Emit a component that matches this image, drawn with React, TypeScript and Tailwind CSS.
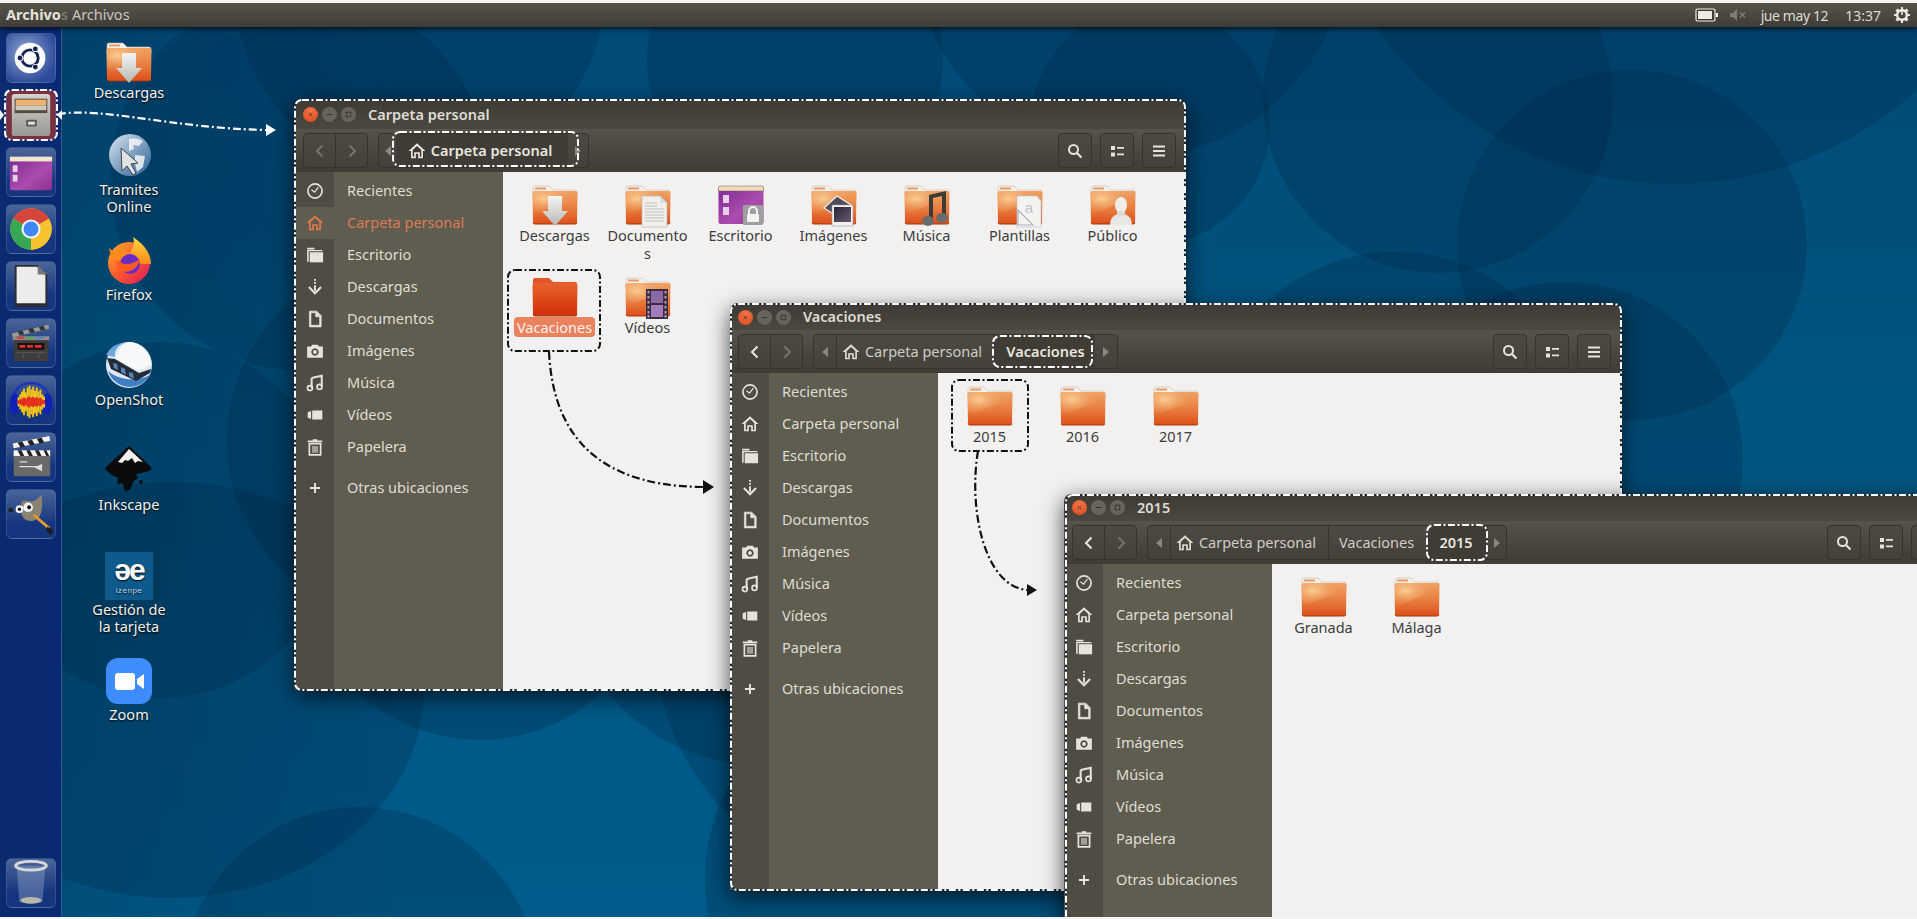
import React from "react";

const ink = "#e6e3da";

function SideIcon({ name, color = ink }: { name: string; color?: string }) {
  const c = color;
  const body: Record<string, React.ReactNode> = {
    clock: (<><circle cx="8" cy="8" r="6.300" fill="none" stroke={c} strokeWidth="1.500" /><path d="M4.800 6.800 7.600 9 11 4.600" fill="none" stroke={c} strokeWidth="1.100" /></>),
    home: (<path fillRule="evenodd" d="M8 1 .5 8h2.200v6.500H7v-4h2v4h4.300V8h2.200zM8 3.500 4.200 7.100V13h1.300V9h5v4h1.300V7.100z" fill={c} />),
    folder: (<><path d="M1 1.500h6.500V3H1zM1 3.500h13.500v1.200H2.400V14H1z" fill={c} /><path d="M3.300 5.500H15.200V14.500H3.300z" fill={c} /></>),
    down: (<><path d="M8 .8v1.600M8 3.600v1.600M8 6.400v5" stroke={c} strokeWidth="1.700" /><path d="M2.600 8 8 13.600 13.400 8" fill="none" stroke={c} strokeWidth="1.800" /></>),
    doc: (<path fillRule="evenodd" d="M3 1h6.500L13.500 5v10H3zM4.400 2.400v11.200h7.700V6H8.600V2.400z" fill={c} stroke={c} strokeWidth=".6" />),
    cam: (<path fillRule="evenodd" d="M5.500 2.500h5l1 1.500H15v10H1V4h3.500zM8 5.600a3.300 3.300 0 1 0 .01 0zM8 7.200a1.700 1.700 0 1 1-.01 0z" fill={c} />),
    music: (<><path d="M5 3.500 14 1.500v10" fill="none" stroke={c} strokeWidth="1.800" /><path d="M5 3.500V12.500" stroke={c} strokeWidth="1.800" /><circle cx="3.500" cy="12.500" r="2.200" fill="none" stroke={c} strokeWidth="1.500" /><circle cx="12" cy="11.500" r="2.200" fill="none" stroke={c} strokeWidth="1.500" /></>),
    video: (<><path d="M5.500 4h9v8h-9z" fill={c} /><path d="M1.500 5.500 4.500 4.500v7l-3-1z" fill={c} /></>),
    trash: (<><path d="M6 1h4v1.200h4.500v1.600h-13V2.200H6z" fill={c} /><path d="M3 5h10v10H3z" fill="none" stroke={c} strokeWidth="1.500" /><path d="M6.200 7v6M8 7v6M9.800 7v6" stroke={c} strokeWidth="1" /></>),
    plus: (<path d="M8 3.500v9M3.500 8h9" stroke={c} strokeWidth="1.700" />),
  };
  return <svg viewBox="0 0 16 16" className="h-[18px] w-[18px]">{body[name]}</svg>;
}

function Folder({ dark = false, children }: { dark?: boolean; children?: React.ReactNode }) {
  return (
    <svg viewBox="0 0 48 48" className="h-12 w-12 block">
      {dark ? (
        <path d="M2 9V7q0-2 2-2h14l4 4h22q2 0 2 2v4H2z" fill="#e2552a" />
      ) : (
        <>
          <path d="M2 9V7q0-2 2-2h14l4 4h22q2 0 2 2v4H2z" fill="#f6f1ea" stroke="#c9b8a8" strokeWidth=".6" />
          <rect x="4" y="6.500" width="11" height="2" fill="#e79a6a" />
        </>
      )}
      <path d="M1.500 12q0-2 2-2h41q2 0 2 2l-.5 29q0 2-2 2H4q-2 0-2-2z" fill={dark ? "url(#fd)" : "url(#fl)"} />
      {!dark && <path d="M1.500 12q0-2 2-2h41q2 0 2 2l-.2 10Q26 20 2 36z" fill="url(#fh)" />}
      <path d="M2 41.500q0 1.500 2 1.500h40q2 0 2-1.500" fill="none" stroke="#a8340d" strokeWidth="1" />
      {children}
    </svg>
  );
}

const arrowOverlay = (<path d="M17 15h14v15h6L24 45 11 30h6z" fill="url(#silver)" />);
const docOverlay = (<><path d="M18 15h18l7 7v24H18z" fill="#f1efec" stroke="#bcb6ad" strokeWidth=".7" /><path d="M36 15v7h7z" fill="#cfe0ee" /><path d="M21 22h12M21 25h12M21 28h19M21 31h19M21 34h19M21 37h19M21 40h19" stroke="#b5b2ac" strokeWidth=".8" /></>);
const imgOverlay = (<><path d="M14 27 27 15l14 9-10 14z" fill="#544a5a" stroke="#f1efec" strokeWidth="1.200" /><rect x="22" y="24" width="21" height="21" fill="#f4f2ef" stroke="#9a9a9a" strokeWidth=".6" /><rect x="24" y="26" width="17" height="15" fill="url(#imgd)" /></>);
const musicOverlay = (<><path d="M26 14 43 10v4l-13 3v23h-4zM39 13l4-1v25h-4z" fill="#3e3a36" /><ellipse cx="25" cy="40" rx="6" ry="5" fill="#6b6b6b" /><ellipse cx="39" cy="37" rx="6" ry="5" fill="#6b6b6b" /></>);
const tplOverlay = (<><path d="M21 15h20l4 5v26H21z" fill="#f5f3f0" stroke="#bcc4cf" strokeWidth=".7" /><text x="33" y="32" fontSize="15" fill="#b8c4d2" textAnchor="middle" fontFamily="'Liberation Sans',sans-serif">a</text><path d="M22 29v15h15z" fill="none" stroke="#a9b3c0" strokeWidth="1.200" /></>);
const userOverlay = (<><ellipse cx="32" cy="24" rx="6" ry="8" fill="#efedea" /><path d="M21 44q0-9 8-11h6q8 2 8 11z" fill="#e9e7e3" /><path d="M28 30h8v5h-8z" fill="#dedbd7" /></>);
const filmOverlay = (<><rect x="22" y="16" width="22" height="30" fill="#3b2c44" /><rect x="27" y="18" width="12" height="12" fill="#8b6aa3" /><rect x="27" y="32" width="12" height="12" fill="#a37cbb" />{[18, 23, 28, 33, 38, 42].map((y) => (<g key={y}><rect x="23.500" y={y} width="2" height="2.500" fill="#b9a" /><rect x="40.500" y={y} width="2" height="2.500" fill="#b9a" /></g>))}</>);

function DesktopWork({ lock = false }: { lock?: boolean }) {
  return (
    <svg viewBox="0 0 48 48" className="h-12 w-12 block">
      <rect x="1.500" y="5" width="45" height="38" rx="2" fill="url(#purple)" />
      <path d="M1.500 10V7q0-2 2-2h41q2 0 2 2v3z" fill="#f0dcb8" stroke="#7a5a60" strokeWidth=".5" />
      <rect x="6" y="14" width="6" height="8" fill="#e9cfe8" />
      <rect x="6" y="26" width="6" height="8" fill="#e9cfe8" />
      {lock && (<><rect x="26" y="24" width="20" height="20" rx="1" fill="#9f9f9d" /><path d="M32 33v-3a4 4 0 0 1 8 0v3" fill="none" stroke="#f2f2f2" strokeWidth="2" /><rect x="30" y="33" width="12" height="8" rx="1" fill="#f2f2f2" /></>)}
    </svg>
  );
}

type Item = { label: React.ReactNode; kind: string };
const homeItems: Item[] = [
  { label: "Descargas", kind: "down" },
  { label: (<>Documento<br />s</>), kind: "doc" },
  { label: "Escritorio", kind: "desk" },
  { label: "Imágenes", kind: "img" },
  { label: "Música", kind: "music" },
  { label: "Plantillas", kind: "tpl" },
  { label: "Público", kind: "user" },
  { label: "Vacaciones", kind: "sel" },
  { label: "Vídeos", kind: "film" },
];

function FileIcon({ kind }: { kind: string }) {
  if (kind === "desk") return <DesktopWork lock />;
  if (kind === "sel") return <Folder dark />;
  const o: Record<string, React.ReactNode> = { down: arrowOverlay, doc: docOverlay, img: imgOverlay, music: musicOverlay, tpl: tplOverlay, user: userOverlay, film: filmOverlay };
  return <Folder>{o[kind]}</Folder>;
}

const places: [string, string][] = [
  ["clock", "Recientes"], ["home", "Carpeta personal"], ["folder", "Escritorio"], ["down", "Descargas"], ["doc", "Documentos"], ["cam", "Imágenes"], ["music", "Música"], ["video", "Vídeos"], ["trash", "Papelera"],
];

function Sidebar({ activeHome = false }: { activeHome?: boolean }) {
  const row = (icon: string, label: string, on: boolean) => (
    <div key={label} className="flex h-8 items-center">
      <div className={`flex h-full w-[39px] shrink-0 items-center justify-center ${on ? "bg-[#5f5c50]" : ""}`}>
        <SideIcon name={icon} color={on ? "#e2774a" : ink} />
      </div>
      <span className={`pl-[13px] ${on ? "text-[#db7a53]" : "text-[#dfdcd3]"}`}>{label}</span>
    </div>
  );
  return (
    <div className="relative h-full w-[208px] shrink-0 bg-[linear-gradient(to_right,#4f4d43_39px,#5f5c50_39px)] pt-[3px] text-[14.5px]">
      {places.map(([i, l]) => row(i, l, !!activeHome && l === "Carpeta personal"))}
      <div className="mt-[9px]">{row("plus", "Otras ubicaciones", false)}</div>
    </div>
  );
}

function Chevron({ dir, on }: { dir: "l" | "r"; on: boolean }) {
  return (
    <svg viewBox="0 0 16 16" className="h-4 w-4">
      <path d={dir === "l" ? "M10.500 2.500 5 8l5.500 5.500" : "M5.500 2.500 11 8l-5.500 5.500"} fill="none" stroke={on ? "#e8e5de" : "#76736a"} strokeWidth="2" />
    </svg>
  );
}

function Tri({ dir }: { dir: "l" | "r" }) {
  return (
    <svg viewBox="0 0 8 12" className="h-3 w-2">
      <path d={dir === "l" ? "M7 1 1 6l6 5z" : "M1 1l6 5-6 5z"} fill="#8a877e" />
    </svg>
  );
}

const segBtn = "border border-[#36332e] bg-[linear-gradient(#4e4a43,#44413a)]";

function RightButtons() {
  return (
    <div className="ml-auto flex gap-2 pr-[9px]">
      <button className={`flex h-[35px] w-[34px] items-center justify-center rounded-[4px] ${segBtn}`}>
        <svg viewBox="0 0 16 16" className="h-4 w-4"><circle cx="6.500" cy="6.500" r="4.500" fill="none" stroke={ink} strokeWidth="2" /><path d="M10 10l4.500 4.500" stroke={ink} strokeWidth="2.200" /></svg>
      </button>
      <button className={`flex h-[35px] w-[34px] items-center justify-center rounded-[4px] ${segBtn}`}>
        <svg viewBox="0 0 16 16" className="h-4 w-4"><path d="M2 3h4v4H2zM2 9.500h4v4H2zM8 4h7v1.800H8zM8 10.500h7v1.800H8z" fill={ink} /></svg>
      </button>
      <button className={`flex h-[35px] w-[34px] items-center justify-center rounded-[4px] ${segBtn}`}>
        <svg viewBox="0 0 16 16" className="h-4 w-4"><path d="M2 2.500h12v2H2zM2 7h12v2H2zM2 11.500h12v2H2z" fill={ink} /></svg>
      </button>
    </div>
  );
}

type Crumb = { label: string; home?: boolean; active?: boolean; w: string };

function PathBar({ crumbs, leftW, rightW, solo }: { crumbs: Crumb[]; leftW: string; rightW: string; solo?: boolean }) {
  return (
    <div className={`ml-[10px] flex h-[35px] overflow-hidden rounded-[4px] ${segBtn}`}>
      <div className={`flex ${leftW} items-center justify-center`}><Tri dir="l" /></div>
      {crumbs.map((c, i) => (
        <div key={c.label} className={`flex ${c.w} items-center justify-center gap-[5px] ${i === 0 && !solo ? "border-l border-[#36332e]" : ""} ${i > 0 && !c.active ? "border-l border-[#36332e]" : ""} ${c.active ? "bg-[#3f3c35] font-semibold text-[#e8e5de]" : "text-[#cfccc3]"}`}>
          {c.home && (
            <svg viewBox="0 0 16 16" className="h-[18px] w-[18px]"><path fillRule="evenodd" d="M8 1 .5 8h2.200v6.500H7v-4h2v4h4.300V8h2.200zM8 3.500 4.200 7.100V13h1.300V9h5v4h1.300V7.100z" fill={c.active ? "#e8e5de" : "#dcd9d0"} /></svg>
          )}
          <span>{c.label}</span>
        </div>
      ))}
      <div className={`flex ${rightW} items-center justify-center`}><Tri dir="r" /></div>
    </div>
  );
}

function Ctl({ color, mark }: { color: string; mark: string }) {
  return (
    <span className={`flex h-[15px] w-[15px] items-center justify-center rounded-full ${color}`}>
      <svg viewBox="0 0 10 10" className="h-[9px] w-[9px]">
        {mark === "x" && <path d="M3 3l4 4M7 3 3 7" stroke="#6e2a10" strokeWidth="1.100" />}
        {mark === "-" && <path d="M2 5h6" stroke="#37352f" strokeWidth="1.300" />}
        {mark === "o" && <rect x="2.500" y="2.500" width="5" height="5" fill="none" stroke="#37352f" strokeWidth="1" />}
      </svg>
    </span>
  );
}

function FileGrid({ items }: { items: Item[] }) {
  return (
    <div className="grid grid-cols-[repeat(7,93px)] auto-rows-[92px] pl-[5px] pt-[9px] text-[14.5px]">
      {items.map((it) => (
        <div key={it.kind + String(it.label)} className="flex flex-col items-center">
          <FileIcon kind={it.kind} />
          <span className={`text-center leading-[18px] ${it.kind === "sel" ? "-mt-[4px] rounded-[4px] bg-[#e9825d] px-[3px] py-[1px] text-[#fdf3ee]" : "-mt-[3px] text-[#3d3d3d]"}`}>{it.label}</span>
        </div>
      ))}
    </div>
  );
}

function Win({ pos, titleH, title, nav, crumbs, leftW, rightW, items, activeHome, solo }: { pos: string; titleH: string; title: string; nav: boolean; crumbs: Crumb[]; leftW: string; rightW: string; items: Item[]; activeHome?: boolean; solo?: boolean }) {
  return (
    <div className={`absolute flex w-[890px] flex-col overflow-hidden rounded-t-[7px] shadow-[0_6px_22px_rgba(0,0,0,.7)] ${pos}`}>
      <div className={`flex ${titleH} shrink-0 items-center bg-[linear-gradient(#3e3b35,#4b4840)] pl-[8px]`}>
        <div className="flex gap-[4px]">
          <Ctl color="bg-[radial-gradient(circle_at_50%_30%,#f0764a,#d9481c)]" mark="x" />
          <Ctl color="bg-[#67645b]" mark="-" />
          <Ctl color="bg-[#67645b]" mark="o" />
        </div>
        <span className="pl-[12px] text-[14.5px] font-semibold text-[#dedbd2]">{title}</span>
      </div>
      <div className="flex h-[43px] shrink-0 items-center bg-[linear-gradient(#57534b,#3f3c35)] pl-[8px] text-[14.5px]">
        <div className={`flex h-[35px] w-[65px] overflow-hidden rounded-[4px] ${segBtn}`}>
          <div className="flex flex-1 items-center justify-center border-r border-[#36332e]"><Chevron dir="l" on={nav} /></div>
          <div className="flex flex-1 items-center justify-center"><Chevron dir="r" on={false} /></div>
        </div>
        <PathBar crumbs={crumbs} leftW={leftW} rightW={rightW} solo={solo} />
        <RightButtons />
      </div>
      <div className="flex flex-1 bg-[#f2f1f0]">
        <Sidebar activeHome={activeHome} />
        <div className="min-w-0 flex-1"><FileGrid items={items} /></div>
      </div>
    </div>
  );
}

function Dash({ x, y, w, h, color = "#fff", r = 7, dark = false }: { x: number; y: number; w: number; h: number; color?: string; r?: number; dark?: boolean }) {
  return (
    <g>
      {dark && <rect x={x} y={y} width={w} height={h} rx={r} fill="none" stroke="#1d2a33" strokeWidth="2" />}
      <rect x={x} y={y} width={w} height={h} rx={r} fill="none" stroke={color} strokeWidth="2" strokeDasharray="7 2.500 2 2.500" />
    </g>
  );
}

function Overlay({ children }: { children: React.ReactNode }) {
  return <svg viewBox="0 0 1917 919" className="pointer-events-none absolute left-0 top-0 h-[919px] w-[1917px]">{children}</svg>;
}

const dashLine = { fill: "none", strokeWidth: 2.2, strokeDasharray: "8 3 2 3" };

function Tile({ children, extra = "" }: { children: React.ReactNode; extra?: string }) {
  return (
    <div className={`h-[50px] w-[50px] shrink-0 overflow-hidden rounded-[6px] border border-[#5b76a8]/40 ${extra || "bg-[linear-gradient(#4a6598,#16357f_70%)]"}`}>
      <svg viewBox="0 0 50 50" className="h-full w-full">{children}</svg>
    </div>
  );
}

const wave = [5, 8, 11, 14, 10, 15, 17, 13, 16, 12, 15, 11, 13, 8, 6];

function Launcher() {
  return (
    <aside className="relative z-0 flex h-full w-[62px] shrink-0 flex-col gap-[7px] border-r border-[#4d6b9c]/70 bg-[linear-gradient(to_right,#0b2a70,#082a72)] pl-[6px] pt-[6px]">
      <Tile extra="bg-[radial-gradient(circle_at_40%_40%,#93a9d2,#2b4a9a_75%)]">
        <circle cx="24" cy="25" r="16" fill="#fff" />
        <circle cx="24" cy="25" r="8.500" fill="none" stroke="#14234f" strokeWidth="3" />
        <circle cx="13.500" cy="25" r="3.300" fill="#fff" /><circle cx="29.500" cy="15.500" r="3.300" fill="#fff" /><circle cx="29.500" cy="34.500" r="3.300" fill="#fff" />
        <circle cx="13.500" cy="25" r="2.500" fill="#14234f" /><circle cx="29.500" cy="15.500" r="2.500" fill="#14234f" /><circle cx="29.500" cy="34.500" r="2.500" fill="#14234f" />
      </Tile>
      <Tile extra="bg-[#7a3040]">
        <rect x="5" y="3" width="40" height="44" rx="3" fill="url(#cab)" />
        <rect x="8" y="8" width="34" height="15" fill="#54493f" />
        <rect x="9" y="9" width="32" height="6" fill="#efb26f" />
        <rect x="9" y="15" width="32" height="5" fill="#cfc9bd" />
        <rect x="20" y="30" width="11" height="7" rx="1" fill="#5a5a5a" /><rect x="22" y="32" width="7" height="3" fill="#e5e5e5" />
      </Tile>
      <Tile>
        <rect x="3" y="9" width="44" height="35" rx="2" fill="url(#purple)" />
        <rect x="3" y="9" width="44" height="5" fill="#f3e6c8" />
        <rect x="6" y="18" width="5" height="7" fill="#e8cfe8" /><rect x="6" y="28" width="5" height="7" fill="#e8cfe8" />
      </Tile>
      <Tile>
        <circle cx="25" cy="25" r="21.500" fill="#e0c040" />
        <path d="M25 25 6.400 14.200A21.500 21.500 0 0 1 43.600 14.200z" fill="#d6453c" />
        <path d="M25 25 6.400 14.200A21.500 21.500 0 0 0 25 46.500z" fill="#36a853" />
        <path d="M25 25 43.600 14.200A21.500 21.500 0 0 1 25 46.500z" fill="#f6c22d" />
        <circle cx="25" cy="25" r="10" fill="#f4f4f4" /><circle cx="25" cy="25" r="7.800" fill="#4285f4" />
      </Tile>
      <Tile>
        <path d="M8 3h24l10 10v34H8z" fill="#2b2d33" />
        <path d="M10 5h21l9 9v29H10z" fill="#ececea" />
        <path d="M32 3l10 10H32z" fill="#74767e" />
      </Tile>
      <Tile>
        <rect x="7" y="22" width="36" height="22" rx="2" fill="#3f3d3b" />
        <path d="M5 15 43 6l1 4L6 19z" fill="#9c9a94" /><path d="M11 13l5-1 2 4-5 1zM22 10.500l5-1 2 4-5 1zM33 8l5-1 2 4-5 1z" fill="#333" />
        <rect x="6" y="18" width="38" height="4" fill="#8f8d87" />
        <rect x="10" y="18.500" width="8" height="2.500" fill="#c44" /><rect x="20" y="18.500" width="8" height="2.500" fill="#5a5" /><rect x="30" y="18.500" width="8" height="2.500" fill="#58c" />
        <rect x="11" y="25" width="28" height="7" fill="#1b1010" /><path d="M13 28.500h6M21 28.500h6M29 28.500h7" stroke="#e0332c" strokeWidth="3" />
        <path d="M9 35h32M17 35v6M33 35v6" stroke="#5a5855" strokeWidth="1" />
      </Tile>
      <Tile>
        <path d="M6 26C6 1 44 1 44 26" fill="none" stroke="#1c34b5" strokeWidth="2.500" />
        <ellipse cx="8" cy="29" rx="5" ry="11" fill="#0f21b8" /><ellipse cx="42" cy="29" rx="5" ry="11" fill="#0f21b8" />
        {wave.map((h, i) => (<rect key={i} x={11 + i * 1.900} y={27 - h} width="2" height={h * 2} rx="1" fill="#f9c61c" />))}
        {wave.map((h, i) => (<rect key={i} x={11 + i * 1.900} y={27 - h / 3} width="2" height={(h * 2) / 3} fill="#e6281c" />))}
      </Tile>
      <Tile>
        <rect x="7" y="19" width="38" height="26" rx="1" fill="#6a6a68" />
        <rect x="7" y="18" width="38" height="6" fill="#f4f4f4" />
        <path d="M11 18l3 6h4l-3-6zM20 18l3 6h4l-3-6zM29 18l3 6h4l-3-6zM38 18l3 6h3l-3-6z" fill="#222" />
        <path d="M6 11 44 3l1 5L7 16z" fill="#f2f2f2" />
        <path d="M11 10l5-1 3 5-5 1zM21 8l5-1 3 5-5 1zM31 6l5-1 3 5-5 1z" fill="#222" />
        <path d="M13 30h8M13 35h20M30 36l6-3v6z" stroke="#ddd" fill="#ddd" strokeWidth="1.200" />
      </Tile>
      <Tile>
        <path d="M15 16C14 8 20 12 25 12s9-5 11-7c1 8 1 14-1 20-3 8-12 9-17 5-4-4-4-10-3-14z" fill="#8a8272" />
        <circle cx="22" cy="18" r="5" fill="#f5f5f5" /><circle cx="23" cy="18" r="2" fill="#111" />
        <circle cx="13" cy="20" r="4" fill="#f5f5f5" /><circle cx="13" cy="20" r="1.800" fill="#111" />
        <circle cx="4" cy="21" r="2.500" fill="#222" />
        <path d="M28 26 44 40" stroke="#e39b2c" strokeWidth="3" /><path d="M42 38l6 4-2 5-5-4z" fill="#1b1b1b" />
      </Tile>
      <div className="mb-[9px] mt-auto">
        <Tile>
          <path d="M10 7h30l-3 38q-12 2-24 0z" fill="#9fb1d0" opacity=".38" />
          <ellipse cx="25" cy="7" rx="16" ry="4.500" fill="none" stroke="#d8d8d8" strokeWidth="3" />
          <ellipse cx="25" cy="43" rx="11" ry="3.500" fill="#b9b9ab" />
        </Tile>
      </div>
    </aside>
  );
}

function Icon48({ children }: { children: React.ReactNode }) {
  return <svg viewBox="0 0 48 48" className="h-12 w-12 block">{children}</svg>;
}

const desktopIcons: { top: string; gap: string; label: React.ReactNode; icon: React.ReactNode }[] = [
  { top: "top-[38px]", gap: "-mt-[2px]", label: "Descargas", icon: <Folder>{arrowOverlay}</Folder> },
  {
    top: "top-[131px]", gap: "mt-[2px]", label: (<>Tramites<br />Online</>), icon: (
      <Icon48>
        <circle cx="25" cy="24" r="21" fill="url(#globe)" />
        <path d="M24 8q8-2 14 2l-4 5-6-1 1 4-5 2zM30 24l10 1-2 11-6 5-2-8z" fill="#f1f4f7" opacity=".85" />
        <path d="M16 17l1 23 5-5 6 9 3-2-5-9 7-1z" fill="#dfe3e3" stroke="#3b4650" strokeWidth="1" />
      </Icon48>
    ),
  },
  {
    top: "top-[236px]", gap: "mt-[2px]", label: "Firefox", icon: (
      <Icon48>
        <circle cx="24" cy="27" r="21" fill="url(#ffx)" />
        <path d="M28 1c12 8 18 17 18 27H30c0-6 0-8-5-11 3-5 5-10 3-16z" fill="url(#ffy)" />
        <path d="M4 12c3 3 5 3 9 2l3-5c1 6 6 5 9 9l-10 6c-6 1-10-5-11-12z" fill="#ff8a1e" />
        <circle cx="25" cy="28" r="10" fill="#6c2bc4" />
        <path d="M12 24c4 4 12 7 23-1-2 10-12 16-20 11-3-2-4-6-3-10z" fill="#ff5d20" />
      </Icon48>
    ),
  },
  {
    top: "top-[341px]", gap: "mt-[2px]", label: "OpenShot", icon: (
      <Icon48>
        <circle cx="24" cy="24" r="23" fill="#dfe9f3" />
        <path d="M3 30a23 23 0 0 0 42 4C30 42 12 38 3 30z" fill="#3f7fc4" />
        <path d="M22 1C14 6 10 14 12 19l20 10c6 0 13-4 14-6C45 10 34 0 22 1z" fill="#f6f8fa" />
        <path d="M22 1C12 4 9 10 10 16l-9-2q6-12 21-13z" fill="#6ca5dc" />
        <path d="M2 17l8 1 24 14 12-4-1 4-14 8L6 28z" fill="#222c3a" />
        <path d="M8 22l4 1 1 6-4-2zM16 26l4 2 1 6-5-3zM24 31l4 1 1 6-5-3z" fill="#5a86b5" />
      </Icon48>
    ),
  },
  {
    top: "top-[446px]", gap: "mt-[2px]", label: "Inkscape", icon: (
      <Icon48>
        <path d="M24 0 46 21q1 3-2 4l-12 3q-2 0 0 2 2 3-2 4l-2 2q0 4-4 8-3 3-5-1l-1-5-5-2q-2-3 1-4-9-3-12-7-3-2-1-4z" fill="#0b0b0b" />
        <path d="M24 3 38 16l-5-1-3 2-3-5-4 3-3-1-3 3-4-1z" fill="#f2f2f2" />
        <circle cx="36" cy="36" r="2" fill="#111" /><circle cx="14" cy="37" r="1.500" fill="#111" />
      </Icon48>
    ),
  },
  {
    top: "top-[552px]", gap: "mt-[1px]", label: (<>Gestión de<br />la tarjeta</>), icon: (
      <div className="flex h-12 w-12 flex-col items-center bg-[#0f5a8d] pt-[2px] font-['Liberation_Sans',sans-serif] text-white">
        <span className="text-[30px] font-bold leading-[32px] tracking-[-2px]">əe</span>
        <span className="text-[8px] leading-[9px] tracking-[.5px] text-[#c4d8e6]">izenpe</span>
      </div>
    ),
  },
  {
    top: "top-[657px]", gap: "mt-[1px]", label: "Zoom", icon: (
      <Icon48>
        <rect x="1" y="1" width="46" height="46" rx="12" fill="#3f8cff" />
        <rect x="10" y="16" width="20" height="17" rx="3" fill="#fff" />
        <path d="M32 22l7-5v15l-7-5z" fill="#fff" />
      </Icon48>
    ),
  },
];

function DesktopIcons() {
  return (
    <>
      {desktopIcons.map((d, i) => (
        <div key={i} className={`absolute left-[81px] flex w-[96px] flex-col items-center text-center text-[14.5px] leading-[17px] text-[#f1f1ee] [text-shadow:0_1px_2px_#000] ${d.top}`}>
          {d.icon}
          <span className={d.gap}>{d.label}</span>
        </div>
      ))}
    </>
  );
}

const wallShapes: [number, number, number, number][] = [
  [1438, 98, 175, 175], [1674, -177, 361, 361], [1632, 245, 175, 175], [1565, 460, 178, 178], [1395, 440, 188, 188],
  [1150, 125, 120, 120], [360, 985, 178, 178], [172, 690, 252, 208], [160, 520, 178, 178], [410, 440, 183, 183],
  [480, 560, 180, 180], [760, 570, 195, 195], [900, 640, 245, 245], [905, 880, 200, 200], [300, 180, 190, 190],
  [420, -10, 185, 185], [795, 60, 148, 148], [1130, -60, 218, 218], [1240, 1000, 160, 160], [1790, 880, 120, 120],
];

function Wallpaper() {
  return (
    <svg viewBox="0 0 1917 919" className="absolute left-0 top-0 h-[919px] w-[1917px]">
      <rect width="1917" height="919" fill="url(#wall)" />
      {wallShapes.map(([cx, cy, rx, ry]) => (
        <ellipse key={`${cx}-${cy}`} cx={cx} cy={cy} rx={rx} ry={ry} fill="#00213f" fillOpacity=".24" />
      ))}
      <rect width="400" height="919" fill="url(#wallLeft)" />
    </svg>
  );
}

const defs = (
  <svg className="absolute h-0 w-0">
    <defs>
      <linearGradient id="wall" x1="0" y1="0" x2="0" y2="1"><stop offset="0" stopColor="#014a78" /><stop offset=".4" stopColor="#00547f" /><stop offset="1" stopColor="#005c8c" /></linearGradient>
      <linearGradient id="wallLeft" x1="0" y1="0" x2="1" y2="0"><stop offset="0" stopColor="#00213f" stopOpacity=".28" /><stop offset="1" stopColor="#00213f" stopOpacity="0" /></linearGradient>
      <linearGradient id="fl" x1="0" y1="0" x2="0" y2="1"><stop offset="0" stopColor="#f0a264" /><stop offset=".55" stopColor="#e87b3e" /><stop offset="1" stopColor="#dd4f1a" /></linearGradient>
      <radialGradient id="fh" cx=".25" cy=".3" r=".6"><stop offset="0" stopColor="#fbd39a" stopOpacity=".9" /><stop offset="1" stopColor="#f0a264" stopOpacity="0" /></radialGradient>
      <linearGradient id="fd" x1="0" y1="0" x2="0" y2="1"><stop offset="0" stopColor="#e9622e" /><stop offset="1" stopColor="#cf2f07" /></linearGradient>
      <linearGradient id="silver" x1="0" y1="0" x2="0" y2="1"><stop offset="0" stopColor="#f5f5f3" /><stop offset="1" stopColor="#b7b7b3" /></linearGradient>
      <linearGradient id="imgd" x1="0" y1="0" x2="1" y2="1"><stop offset="0" stopColor="#2b2238" /><stop offset="1" stopColor="#6a5a72" /></linearGradient>
      <linearGradient id="purple" x1="0" y1="0" x2="1" y2="1"><stop offset="0" stopColor="#7a2a93" /><stop offset=".6" stopColor="#ac4cae" /><stop offset="1" stopColor="#8a2f8c" /></linearGradient>
      <linearGradient id="cab" x1="0" y1="0" x2="0" y2="1"><stop offset="0" stopColor="#d4d2cc" /><stop offset="1" stopColor="#9a9892" /></linearGradient>
      <linearGradient id="globe" x1="0" y1="0" x2="1" y2="1"><stop offset="0" stopColor="#dbe6f0" /><stop offset="1" stopColor="#2a5f94" /></linearGradient>
      <linearGradient id="ffx" x1="0" y1="0" x2="1" y2="1"><stop offset="0" stopColor="#ffb12a" /><stop offset=".5" stopColor="#ff5a2d" /><stop offset="1" stopColor="#d6145e" /></linearGradient>
      <linearGradient id="ffy" x1="0" y1="0" x2="0" y2="1"><stop offset="0" stopColor="#ffd93a" /><stop offset="1" stopColor="#ff8a1e" /></linearGradient>
    </defs>
  </svg>
);

export default function App() {
  return (
    <div className="relative flex h-[919px] w-[1917px] flex-col overflow-hidden bg-white font-['Noto_Sans',sans-serif]">
      {defs}
      <div className="relative z-50 h-[3px] shrink-0 bg-[#f4f4f2]" />
      <header className="relative z-40 flex h-[24px] shrink-0 items-center justify-between bg-[linear-gradient(#57544c,#3f3c36)] pl-[6px] pr-[7px] text-[14.5px] text-[#dedbd2] shadow-[0_2px_5px_rgba(0,0,0,.7)]">
        <div>
          <span className="font-bold text-[#e6e3da]">Archivo</span><span className="font-bold text-[#77746b]">s</span> <span className="text-[#c9c6bd]">Archivos</span>
        </div>
        <div className="flex items-center text-[14px]">
          <svg viewBox="0 0 24 14" className="h-[14px] w-[24px]"><rect x="1" y="1" width="19" height="12" rx="1.500" fill="#3f3c36" stroke="#f2f0ea" strokeWidth="1.200" /><rect x="3" y="3" width="14" height="8" fill="#eceae3" /><rect x="21" y="5" width="2" height="4" fill="#f2f0ea" /></svg>
          <svg viewBox="0 0 18 14" className="ml-[10px] h-[14px] w-[18px]"><path d="M1 5h3l4-4v12l-4-4H1z" fill="#7f7c73" /><path d="M11 4.500l5 5M16 4.500l-5 5" stroke="#7f7c73" strokeWidth="1.400" /></svg>
          <span className="ml-[14px] tracking-[-.4px]">jue may 12</span>
          <span className="ml-[17px]">13:37</span>
          <svg viewBox="0 0 16 16" className="ml-[13px] h-[16px] w-[16px]"><path fillRule="evenodd" d="M7 0h2v2l2 .8L12.500 1.500 14.500 3.500 13.200 5l.8 2h2v2h-2l-.8 2 1.300 1.500-2 2L11 13.200l-2 .8v2H7v-2l-2-.8L3.500 14.500l-2-2L2.800 11 2 9H0V7h2l.8-2L1.500 3.500l2-2L5 2.800 7 2z" fill="#ebe9e2" /><circle cx="8" cy="8" r="3.600" fill="#47443d" /><path d="M8 3.500v4.500" stroke="#ebe9e2" strokeWidth="1.600" /></svg>
        </div>
      </header>
      <main className="relative flex min-h-0 flex-1">
        <div className="absolute left-0 top-[-27px] h-[919px] w-[1917px]">
          <Wallpaper />
          <DesktopIcons />
        </div>
        <Launcher />
      </main>
      <div className="relative z-50 h-[2px] shrink-0 bg-[#f4f4f2]" />

      <Win pos="left-[295px] top-[100px] h-[590px]" titleH="h-[29px]" title="Carpeta personal" nav={false}
        crumbs={[{ label: "Carpeta personal", home: true, active: true, w: "w-[172px] pr-[4px]" }]} leftW="w-[17px]" rightW="w-[20px]" items={homeItems} activeHome solo />
      <Overlay>
        <Dash x={295} y={100} w={890} h={590} dark />
        <Dash x={393} y={132} w={185} h={34} />
        <Dash x={508} y={270} w={92} h={81} color="#111" />
        <path d="M549 352C552 410 575 487 705 487" stroke="#111" {...dashLine} />
        <path d="M703 480l11 7-11 7z" fill="#111" />
        <Dash x={5} y={90} w={52} h={50} />
        <path d="M58 114C105 107 170 128 266 130" stroke="#fff" {...dashLine} />
        <path d="M266 124l10 6-10 6z" fill="#fff" />
        <path d="M0 110l4 5-4 5z" fill="#fff" />
        <path d="M62 110l-5 5 5 5z" fill="#fff" />
      </Overlay>

      <Win pos="left-[730px] top-[304px] h-[586px]" titleH="h-[26px]" title="Vacaciones" nav
        crumbs={[{ label: "Carpeta personal", home: true, w: "w-[157px] pr-[6px]" }, { label: "Vacaciones", active: true, w: "w-[102px] pl-[3px]" }]} leftW="w-[22px]" rightW="w-[22px]"
        items={[{ label: "2015", kind: "plain" }, { label: "2016", kind: "plain" }, { label: "2017", kind: "plain" }]} />
      <Overlay>
        <Dash x={731} y={304} w={890} h={586} dark />
        <Dash x={993} y={336} w={99} h={31} />
        <Dash x={952} y={380} w={76} h={71} color="#111" />
        <path d="M978 451C968 510 985 590 1030 590" stroke="#111" {...dashLine} />
        <path d="M1027 584l10 6-10 6z" fill="#111" />
      </Overlay>

      <Win pos="left-[1064px] top-[494px] h-[586px]" titleH="h-[27px]" title="2015" nav
        crumbs={[{ label: "Carpeta personal", home: true, w: "w-[158px] pr-[7px]" }, { label: "Vacaciones", w: "w-[100px] pr-[4px]" }, { label: "2015", active: true, w: "w-[60px] pr-[4px]" }]} leftW="w-[22px]" rightW="w-[18px]"
        items={[{ label: "Granada", kind: "plain" }, { label: "Málaga", kind: "plain" }]} />
      <Overlay>
        <Dash x={1066} y={495} w={900} h={600} dark />
        <Dash x={1427} y={525} w={60} h={35} />
      </Overlay>
    </div>
  );
}
